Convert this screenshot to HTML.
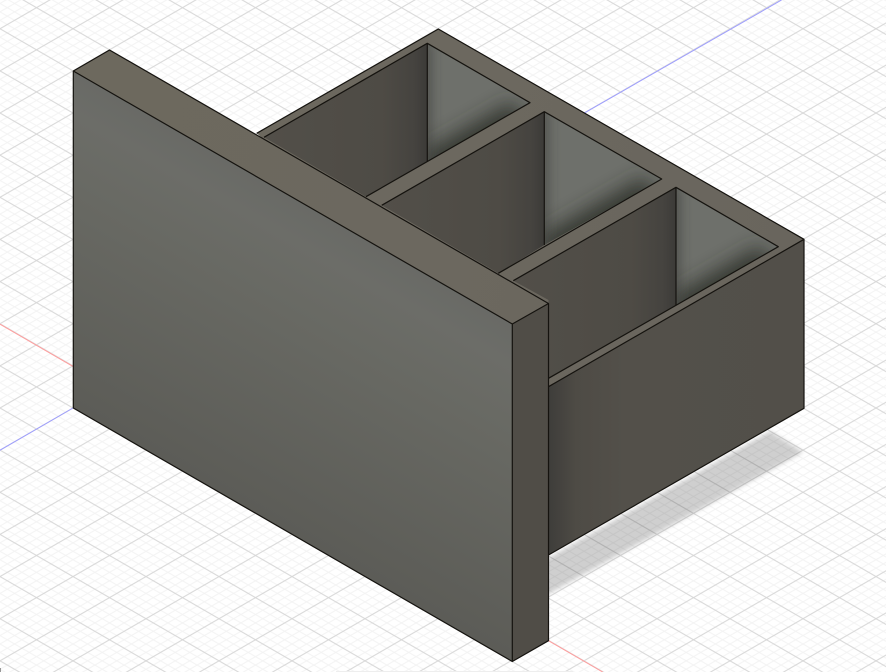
<!DOCTYPE html>
<html>
<head>
<meta charset="utf-8">
<title>Model</title>
<style>
html,body{margin:0;padding:0;background:#fff;width:886px;height:672px;overflow:hidden}
svg{display:block}
</style>
</head>
<body>
<svg width="886" height="672" viewBox="0 0 886 672" xmlns="http://www.w3.org/2000/svg">
<defs>
<pattern id="grid" patternUnits="userSpaceOnUse" x="-.5" y="-.5" width="1" height="1" patternTransform="matrix(36.5,21.07,36.5,-21.07,73,408)">
<rect x="0" y="0" width="1" height="1" fill="#fff"/>
<g fill="#f3f3f3">
<rect x=".0863" y="0" width=".0274" height="1"/><rect x=".2863" y="0" width=".0274" height="1"/><rect x=".6863" y="0" width=".0274" height="1"/><rect x=".8863" y="0" width=".0274" height="1"/>
<rect y=".0863" x="0" height=".0274" width="1"/><rect y=".2863" x="0" height=".0274" width="1"/><rect y=".6863" x="0" height=".0274" width="1"/><rect y=".8863" x="0" height=".0274" width="1"/>
</g>
<g fill="#d6d6d6">
<rect x=".4863" y="0" width=".0274" height="1"/>
<rect y=".4863" x="0" height=".0274" width="1"/>
</g>
</pattern>
<linearGradient id="plate" gradientUnits="userSpaceOnUse" x1="73" y1="72" x2="-72" y2="324">
<stop offset="0" stop-color="#696a66"/><stop offset=".12" stop-color="#6c6d68"/><stop offset=".35" stop-color="#686963"/><stop offset="1" stop-color="#5c5c57"/>
</linearGradient>
<linearGradient id="top" gradientUnits="userSpaceOnUse" x1="100" y1="60" x2="800" y2="240">
<stop offset="0" stop-color="#6d695e"/><stop offset=".5" stop-color="#6c685f"/><stop offset="1" stop-color="#69655d"/>
</linearGradient>
<linearGradient id="side" gradientUnits="userSpaceOnUse" x1="548" y1="0" x2="804" y2="0">
<stop offset="0" stop-color="#3e3d3a"/><stop offset=".05" stop-color="#45433f"/><stop offset=".11" stop-color="#4e4b45"/><stop offset=".3" stop-color="#53504a"/><stop offset="1" stop-color="#524f49"/>
</linearGradient>
<linearGradient id="w1" gradientUnits="userSpaceOnUse" x1="264" y1="0" x2="428" y2="0">
<stop offset="0" stop-color="#524f49"/><stop offset=".72" stop-color="#4e4b45"/><stop offset=".92" stop-color="#45433f"/><stop offset="1" stop-color="#3b3a37"/>
</linearGradient>
<linearGradient id="w2" gradientUnits="userSpaceOnUse" x1="381" y1="0" x2="545" y2="0">
<stop offset="0" stop-color="#524f49"/><stop offset=".72" stop-color="#4e4b45"/><stop offset=".92" stop-color="#45433f"/><stop offset="1" stop-color="#3b3a37"/>
</linearGradient>
<linearGradient id="w3" gradientUnits="userSpaceOnUse" x1="513" y1="0" x2="677" y2="0">
<stop offset="0" stop-color="#524f49"/><stop offset=".72" stop-color="#4e4b45"/><stop offset=".92" stop-color="#45433f"/><stop offset="1" stop-color="#3b3a37"/>
</linearGradient>
<filter id="bl" x="-10%" y="-10%" width="120%" height="120%"><feGaussianBlur stdDeviation="2"/></filter>
<filter id="s" filterUnits="userSpaceOnUse" x="380" y="0" width="440" height="350"><feGaussianBlur stdDeviation="10"/></filter>
<filter id="t" filterUnits="userSpaceOnUse" x="380" y="0" width="440" height="350"><feGaussianBlur stdDeviation="6"/></filter>
<clipPath id="cr1"><polygon points="427.3,43.3 530,102.7 427.3,161.7"/></clipPath>
<clipPath id="cr2"><polygon points="544.3,111.7 661.7,179 544.3,245"/></clipPath>
<clipPath id="cr3"><polygon points="676,187.3 778.3,246.7 676,305"/></clipPath>
</defs>

<!-- grid -->
<rect width="886" height="672" fill="url(#grid)"/>

<!-- axes -->
<path d="M0 324.2L73 366.4M548.5 640.7L602.7 672" stroke="#ff9c9c" stroke-width="1" fill="none"/>
<path d="M0 450.2L73 408M548 133.8L781.6 0" stroke="#9c9cff" stroke-width="1" fill="none"/>

<!-- shadow -->
<polygon points="545,560 770,431 803,452 545,596" fill="#000" fill-opacity=".19" filter="url(#bl)"/>

<!-- bottom strip -->
<rect x="336" y="671" width="237" height="1" fill="#eeeeee"/>
<rect x="0" y="668" width="1" height="4" fill="#999"/>

<!-- box top -->
<polygon points="438.3,29 804,239.3 548.5,386.7 256.7,133.3" fill="url(#top)"/>

<!-- cell 1 -->
<polygon points="427.3,43.3 264,137.3 366,196.7 427.3,161.7" fill="url(#w1)"/>
<g clip-path="url(#cr1)">
<rect x="420" y="40" width="115" height="125" fill="#6e706b"/>
<path d="M427 166L520 113" stroke="#33342f" stroke-width="26" fill="none" filter="url(#s)"/>
<path d="M425 40V168" stroke="#3a3b38" stroke-width="10" fill="none" filter="url(#t)" opacity=".7"/>
</g>
<!-- cell 2 -->
<polygon points="544.3,111.7 381.7,205.3 498.3,273.3 544.3,245" fill="url(#w2)"/>
<g clip-path="url(#cr2)">
<rect x="540" y="108" width="125" height="140" fill="#6e706b"/>
<path d="M544 250L652 188" stroke="#33342f" stroke-width="26" fill="none" filter="url(#s)"/>
<path d="M542 108V252" stroke="#3a3b38" stroke-width="10" fill="none" filter="url(#t)" opacity=".7"/>
</g>
<!-- cell 3 -->
<polygon points="676,187.3 513.3,280.7 548.5,300 548.5,378.3 676,305" fill="url(#w3)"/>
<g clip-path="url(#cr3)">
<rect x="672" y="184" width="110" height="125" fill="#6e706b"/>
<path d="M676 310L768 257" stroke="#33342f" stroke-width="26" fill="none" filter="url(#s)"/>
<path d="M674 184V312" stroke="#3a3b38" stroke-width="10" fill="none" filter="url(#t)" opacity=".7"/>
</g>

<!-- right face -->
<polygon points="804,239.3 804,408.3 548.5,555 548.5,386.7" fill="url(#side)"/>

<!-- edges of box -->
<g fill="none" stroke="#15130f" stroke-width="1.2" stroke-linejoin="round">
<path d="M256.7 133.3L438.3 29L804 239.3V408.3L548.5 555"/>
<path d="M804 239.3L548.5 386.7"/>
<path d="M264 137.3L427.3 43.3L530 102.7L366 196.7"/>
<path d="M427.3 43.3V161.7"/>
<path d="M381.7 205.3L544.3 111.7L661.7 179L498.3 273.3"/>
<path d="M544.3 111.7V245"/>
<path d="M513.3 280.7L676 187.3L778.3 246.7L548.5 378.3"/>
<path d="M676 187.3V305"/>
</g>

<!-- plate -->
<polygon points="73.3,71 512.3,324 512.3,661.5 73.3,408" fill="url(#plate)"/>
<polygon points="73.3,71 109.5,50 548.5,303.5 512.3,324" fill="url(#top)"/>
<polygon points="512.3,324 548.5,303.5 548.5,640.7 512.3,661.5" fill="#504d47"/>
<g fill="none" stroke="#15130f" stroke-width="1.2" stroke-linejoin="round">
<path d="M73.3 71L109.5 50L548.5 303.5V640.7L512.3 661.5L73.3 408Z"/>
<path d="M73.3 71L512.3 324V661.5"/>
<path d="M512.3 324L548.5 303.5"/>
</g>
</svg>
</body>
</html>
